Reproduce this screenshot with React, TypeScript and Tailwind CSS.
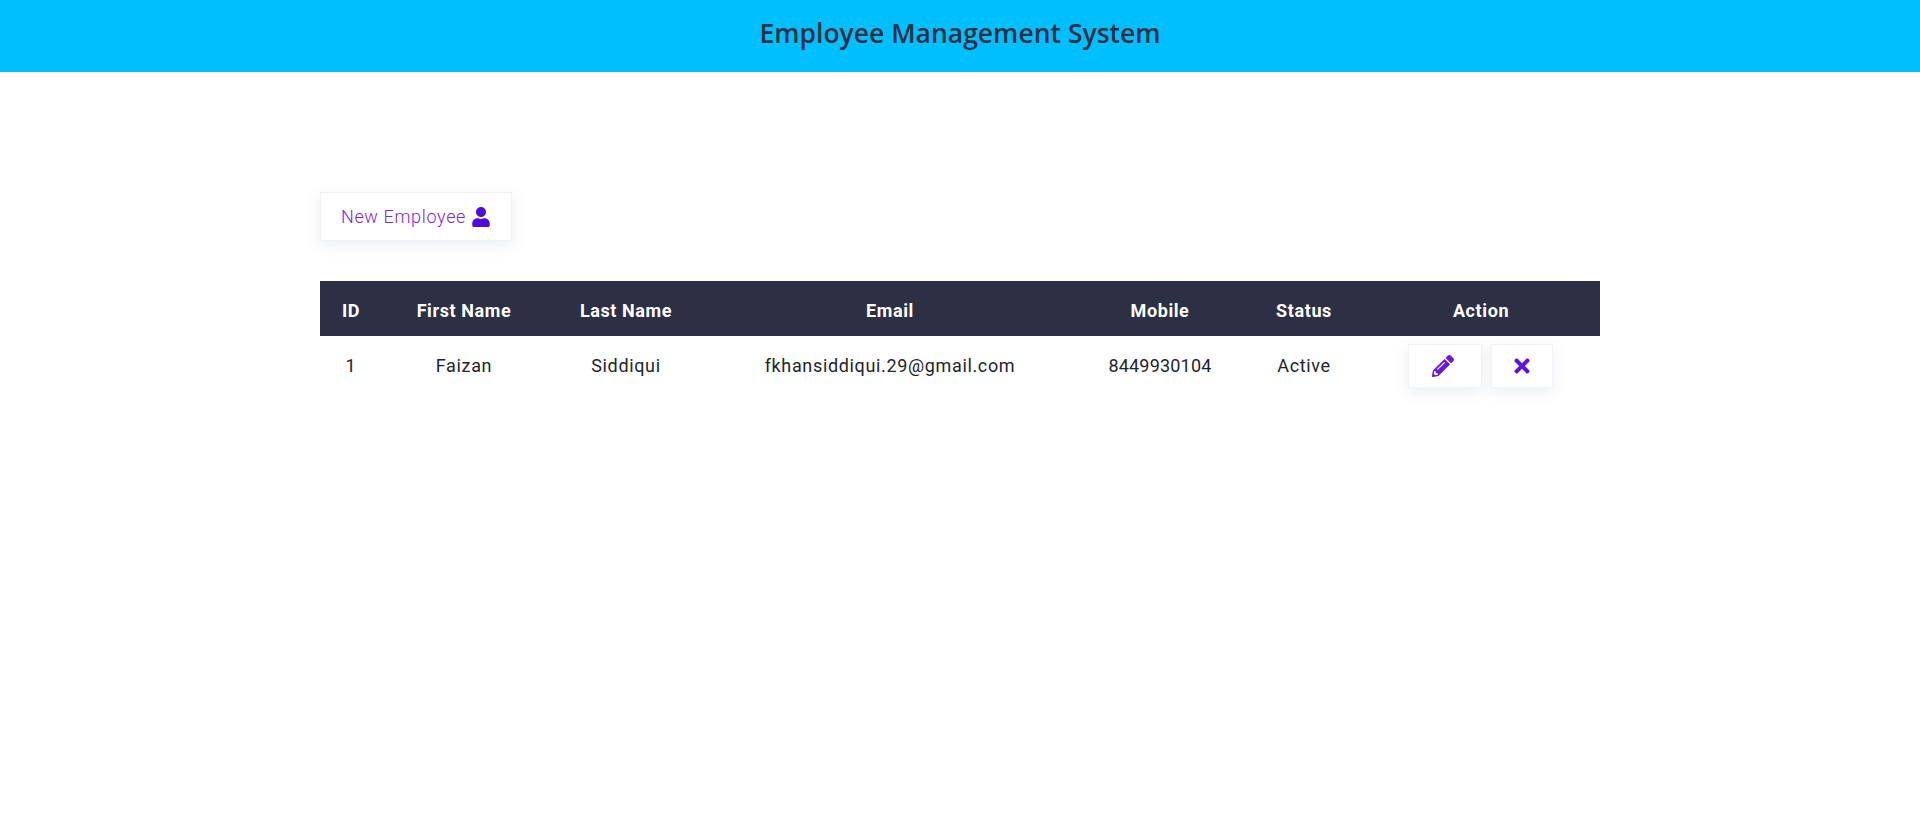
import { FaPencilAlt, FaTimes, FaUser } from "react-icons/fa";

const columns = [
  { label: "ID", width: "w-[62px]" },
  { label: "First Name", width: "w-[164px]" },
  { label: "Last Name", width: "w-[160px]" },
  { label: "Email", width: "w-[368px]" },
  { label: "Mobile", width: "w-[172px]" },
  { label: "Status", width: "w-[116px]" },
  { label: "Action", width: "w-[238px]" },
];

const employees = [
  {
    id: 1,
    firstName: "Faizan",
    lastName: "Siddiqui",
    email: "fkhansiddiqui.29@gmail.com",
    mobile: "8449930104",
    status: "Active",
  },
];

const App = () => {
  return (
    <div className="min-h-[835px] bg-white font-['Roboto',sans-serif]">
      <header className="flex h-[72px] items-center justify-center bg-[#00bfff] pb-1">
        <h1 className="font-['Open_Sans',sans-serif] text-[26.5px] font-semibold text-[#2d2f45]">
          Employee Management System
        </h1>
      </header>

      <main className="mx-auto w-[1280px] pt-[120px]">
        <button className="flex h-[49px] w-[192px] items-center justify-center gap-[5px] border border-[#eef2f6] bg-white text-lg font-light tracking-[0.65px] text-[#7726ea] shadow-[0_4px_14px_rgba(100,116,139,0.12)]">
          New Employee
          <FaUser className="h-5 w-5 text-[#4f0be0]" />
        </button>

        <table className="mt-10 w-full table-fixed text-center">
          <thead>
            <tr className="h-[55px] bg-[#2d2f45] text-lg font-bold tracking-[0.6px] text-white">
              {columns.map((column) => (
                <th key={column.label} className={`${column.width} pt-1`}>
                  {column.label}
                </th>
              ))}
            </tr>
          </thead>
          <tbody>
            {employees.map((employee) => (
              <tr key={employee.id} className="h-[60px] text-lg tracking-[0.65px] text-[#212529]">
                <td>{employee.id}</td>
                <td>{employee.firstName}</td>
                <td>{employee.lastName}</td>
                <td>{employee.email}</td>
                <td className="tracking-[0.2px]">{employee.mobile}</td>
                <td>{employee.status}</td>
                <td>
                  <div className="flex justify-center gap-[9px] pr-0.5">
                    <button className="flex h-11 w-[74px] items-center justify-center border border-[#f0f3f7] bg-white pr-1 shadow-[0_4px_14px_rgba(100,116,139,0.12)]">
                      <FaPencilAlt className="h-[22px] w-[22px] text-[#6a17e0]" />
                    </button>
                    <button className="flex h-11 w-[62px] items-center justify-center border border-[#f0f3f7] bg-white shadow-[0_4px_14px_rgba(100,116,139,0.12)]">
                      <FaTimes className="h-[22px] w-[22px] text-[#5c12e0]" />
                    </button>
                  </div>
                </td>
              </tr>
            ))}
          </tbody>
        </table>
      </main>
    </div>
  );
};

export default App;
